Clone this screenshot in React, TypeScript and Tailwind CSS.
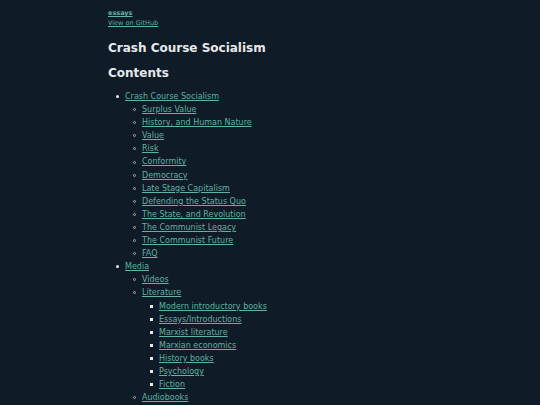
const link = 'text-[#5fb3a0] underline';

type Item = { title: string; children?: Item[] };

const toc: Item[] = [
  {
    title: 'Crash Course Socialism',
    children: [
      { title: 'Surplus Value' },
      { title: 'History, and Human Nature' },
      { title: 'Value' },
      { title: 'Risk' },
      { title: 'Conformity' },
      { title: 'Democracy' },
      { title: 'Late Stage Capitalism' },
      { title: 'Defending the Status Quo' },
      { title: 'The State, and Revolution' },
      { title: 'The Communist Legacy' },
      { title: 'The Communist Future' },
      { title: 'FAQ' },
    ],
  },
  {
    title: 'Media',
    children: [
      { title: 'Videos' },
      {
        title: 'Literature',
        children: [
          { title: 'Modern introductory books' },
          { title: 'Essays/Introductions' },
          { title: 'Marxist literature' },
          { title: 'Marxian economics' },
          { title: 'History books' },
          { title: 'Psychology' },
          { title: 'Fiction' },
        ],
      },
      { title: 'Audiobooks' },
    ],
  },
];

const bullets = [
  'rounded-full bg-[#e6e9ec]',
  'rounded-full border border-[#aab1b8]',
  'bg-[#e6e9ec]',
];

function TocList({ items, depth }: { items: Item[]; depth: number }) {
  return (
    <ul className="pl-[17px]">
      {items.map((item) => (
        <li key={item.title}>
          <div className="-ml-[9px] flex items-center">
            <span className={`mr-[6px] size-[3px] shrink-0 ${bullets[depth]}`} />
            <a href="#" className={link}>
              {item.title}
            </a>
          </div>
          {item.children && <TocList items={item.children} depth={depth + 1} />}
        </li>
      ))}
    </ul>
  );
}

export default function App() {
  return (
    <div className="min-h-[405px] bg-[#0f1b26] font-['DejaVu_Sans',sans-serif] text-[#e6e9ec]">
      <div className="mx-auto w-[324px] pt-[8px]">
        <div className="text-[6.5px] leading-[10px]">
          <a href="#" className={`${link} font-bold`}>
            essays
          </a>
          <br />
          <a href="#" className={link}>
            View on GitHub
          </a>
        </div>
        <h1 className="mt-[11px] text-[12px] font-bold leading-[18px]">Crash Course Socialism</h1>
        <h2 className="mt-[7px] text-[12px] font-bold leading-[18px]">Contents</h2>
        <div className="mt-[8px] text-[8px] leading-[13.1px]">
          <TocList items={toc} depth={0} />
        </div>
      </div>
    </div>
  );
}
